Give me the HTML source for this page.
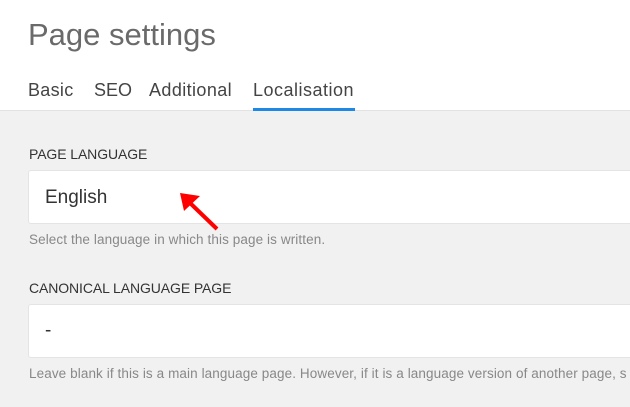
<!DOCTYPE html>
<html><head><meta charset="utf-8"><style>
*{margin:0;padding:0;box-sizing:border-box}
body{width:630px;height:407px;overflow:hidden;background:#f1f1f1;font-family:"Liberation Sans",sans-serif;position:relative}
.hdr{position:absolute;left:0;top:0;width:630px;height:111px;background:#fff;border-bottom:1px solid #e2e2e2}
.title{position:absolute;left:28px;top:17px;font-size:31px;color:#6a6a6a;font-weight:300;letter-spacing:0}
.tab{position:absolute;top:80px;font-size:18px;color:#444}
.ul{position:absolute;left:253px;top:108px;width:102px;height:3px;background:#1e88e5}
.lbl{position:absolute;left:29px;font-size:14px;color:#333;letter-spacing:-0.1px}
.inp{position:absolute;left:28px;width:620px;height:54px;background:#fff;border:1px solid #e4e4e4;border-radius:3px}
.val{position:absolute;left:45px;font-size:19px;color:#333}
.help{position:absolute;left:29px;font-size:13.5px;color:#888;white-space:nowrap;letter-spacing:0.1px}
</style></head><body>
<div class="hdr">
<div class="title">Page settings</div>
<div class="tab" style="left:28px;letter-spacing:0.3px">Basic</div>
<div class="tab" style="left:94px">SEO</div>
<div class="tab" style="left:149px;letter-spacing:0.4px">Additional</div>
<div class="tab" style="left:253px;letter-spacing:0.5px">Localisation</div>
<div class="ul"></div>
</div>
<div class="lbl" style="top:146px">PAGE LANGUAGE</div>
<div class="inp" style="top:170px"></div>
<div class="val" style="top:187px">English</div>
<div class="help" style="top:232px">Select the language in which this page is written.</div>
<div class="lbl" style="top:280px">CANONICAL LANGUAGE PAGE</div>
<div class="inp" style="top:304px"></div>
<div class="val" style="top:320px">-</div>
<div class="help" style="top:366px">Leave blank if this is a main language page. However, if it is a language version of another page, s</div>
<svg style="position:absolute;left:0;top:0" width="630" height="407">
<line x1="217" y1="229" x2="188" y2="201" stroke="#f00" stroke-width="4"/>
<polygon points="180,193 200,196 184,211" fill="#f00"/>
</svg>
</body></html>
